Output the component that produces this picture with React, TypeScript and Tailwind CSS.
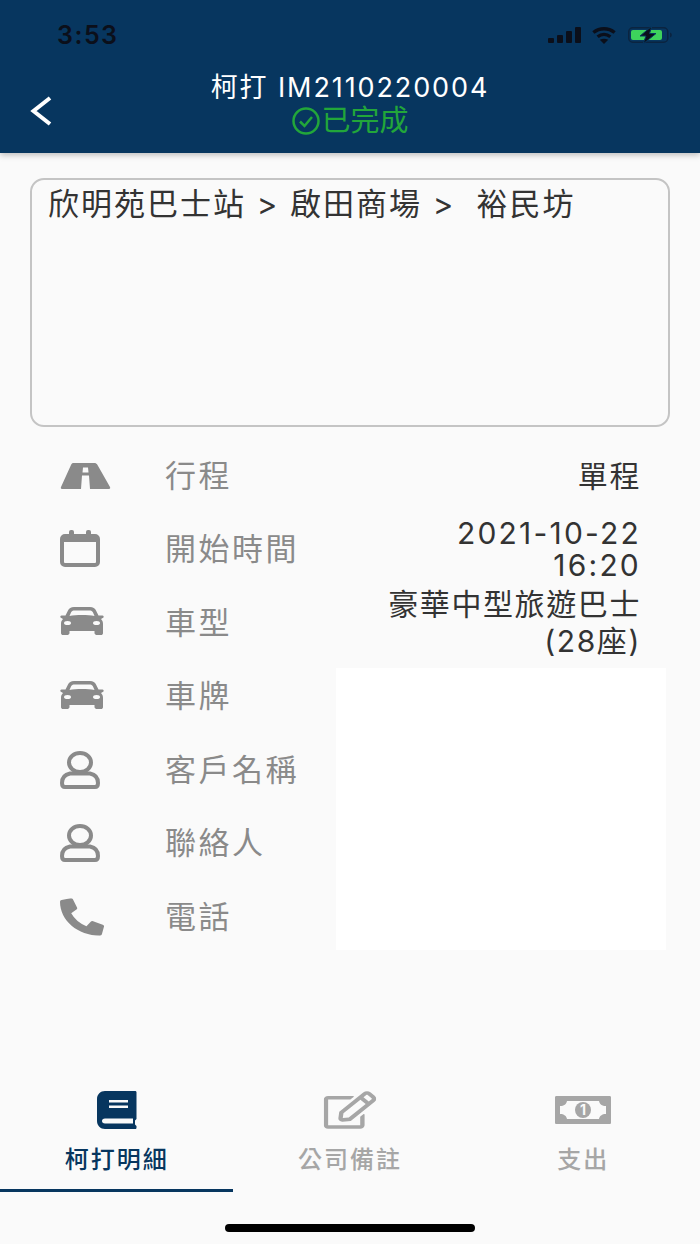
import { FaPhoneAlt, FaRegEdit } from "react-icons/fa";
import type { ReactNode } from "react";

const font = "font-['Inter','Noto_Sans_CJK_TC',sans-serif]";

const Road = () => (
  <svg width="51" height="29" viewBox="0 0 51 29">
    <path d="M13 2 H35 C36 2 37 3 37.5 4 L50 26 C50.5 27 50 28 49 28 H2 C1 28 0.5 27 1 26 L11 4 C11.5 3 12 2 13 2 Z" fill="#8a8a8a" />
    <path d="M23 6.5 H28 L28.5 11.5 H22.5 Z M22 14.5 H29 L30 28 H21 Z" fill="#fafafa" />
  </svg>
);

const Calendar = () => (
  <svg width="40" height="38" viewBox="0 0 40 38" fill="none">
    <rect x="2" y="6" width="36" height="29" rx="3" stroke="#8a8a8a" strokeWidth="4" />
    <rect x="2" y="6" width="36" height="6" fill="#8a8a8a" />
    <rect x="9" y="0" width="5" height="8" rx="2" fill="#8a8a8a" />
    <rect x="26" y="0" width="5" height="8" rx="2" fill="#8a8a8a" />
  </svg>
);

const Car = () => (
  <svg width="44" height="28" viewBox="0 0 44 28" fill="#8a8a8a" className="-mt-[3px]">
    <path
      fillRule="evenodd"
      d="M14 0 H30 C33 0 35 1.5 36 3.5 L38.5 8.5 H42.5 C43.5 8.5 44 9.5 43.5 10.5 L41 12 C42.5 13.5 43 15 43 17 V26 C43 27.5 42 28 41 28 H37 C36 28 34.5 27.5 34.5 26 V24 H9.5 V26 C9.5 27.5 8 28 7 28 H3 C2 28 1 27.5 1 26 V17 C1 15 1.5 13.5 3 12 L0.5 10.5 C0 9.5 0.5 8.5 1.5 8.5 H5.5 L8 3.5 C9 1.5 11 0 14 0 Z M13.5 3.5 H30.5 C31.5 3.5 32.5 4.5 33 5.5 L34.5 9 C28 7.8 16 7.8 9.5 9 L11 5.5 C11.5 4.5 12.5 3.5 13.5 3.5 Z"
    />
    <ellipse cx="7.5" cy="16" rx="3.5" ry="2" fill="#fafafa" />
    <ellipse cx="36.5" cy="16" rx="3.5" ry="2" fill="#fafafa" />
  </svg>
);

const Person = () => (
  <svg width="40" height="38" viewBox="0 0 40 38" fill="none" stroke="#8a8a8a" strokeWidth="4">
    <ellipse cx="20" cy="11.5" rx="11" ry="9.5" />
    <path d="M10 22.5 H30 C35 23.5 38 27 38 32 C38 34.5 37 36 35 36 H5 C3 36 2 34.5 2 32 C2 27 5 23.5 10 22.5 Z" strokeLinejoin="round" />
  </svg>
);

const Book = () => (
  <svg width="40" height="38" viewBox="0 0 40 38">
    <path d="M8 0 H38 C39 0 39.5 0.5 39.5 1.5 V28 L38 29.5 V33.5 L39.5 35 V36.5 C39.5 37.5 39 38 38 38 H8 C3.5 38 0 34.5 0 30 V8 C0 3.5 3.5 0 8 0 Z" fill="#07365f" />
    <path d="M12 9 H31 V11.5 H12 Z M12 14.5 H31 V17 H12 Z" fill="#fafafa" />
    <path d="M8 27.5 H36 V32.5 H8 C6 32.5 5 31.5 5 30 C5 28.5 6 27.5 8 27.5 Z" fill="#fafafa" />
  </svg>
);

const Money = () => (
  <svg width="56" height="28" viewBox="0 0 56 28">
    <path
      fillRule="evenodd"
      d="M1.5 0 H54.5 C55.5 0 56 0.5 56 1.5 V26.5 C56 27.5 55.5 28 54.5 28 H1.5 C0.5 28 0 27.5 0 26.5 V1.5 C0 0.5 0.5 0 1.5 0 Z M12 5 C11.5 8 9 10 5 10 V18 C9 18 11.5 20 12 23 H44 C44.5 20 47 18 51 18 V10 C47 10 44.5 8 44 5 Z"
      fill="#a6a6a6"
    />
    <circle cx="28" cy="14" r="8" fill="#a6a6a6" />
    <text x="28" y="19" textAnchor="middle" fontSize="14" fontWeight="700" fill="#fafafa">1</text>
  </svg>
);

const rows: { icon: ReactNode; label: string; value?: string[]; text?: string }[] = [
  { icon: <Road />, label: "行程", value: ["單程"], text: "leading-[32px] tracking-[1.6px]" },
  { icon: <Calendar />, label: "開始時間", value: ["2021-10-22", "16:20"], text: "leading-[32px] tracking-[2.2px]" },
  { icon: <Car />, label: "車型", value: ["豪華中型旅遊巴士", "(28座)"], text: "leading-[37px] tracking-[1.6px]" },
  { icon: <Car />, label: "車牌" },
  { icon: <Person />, label: "客戶名稱" },
  { icon: <Person />, label: "聯絡人" },
  { icon: <FaPhoneAlt size={44} color="#8a8a8a" className="scale-y-[0.85]" />, label: "電話" },
];

const StatusBar = () => (
  <div className="flex h-[72px] items-start justify-between pt-[21px] pl-[57px] pr-[27px]">
    <span className="text-[25px] leading-[28px] font-semibold tracking-[1.5px] text-[#0b0f1a]">3:53</span>
    <div className="flex h-[28px] items-center">
      <svg width="33" height="16" viewBox="0 0 33 16" fill="#0b0f1a">
        <rect x="0" y="11" width="6" height="5" rx="1" />
        <rect x="9" y="8" width="6" height="8" rx="1" />
        <rect x="18" y="4" width="6" height="12" rx="1" />
        <rect x="27" y="0" width="6" height="16" rx="1" />
      </svg>
      <svg width="28" height="17" viewBox="0 0 28 20" fill="none" stroke="#0b0f1a" strokeWidth="4" className="ml-[9px]">
        <path d="M1.5 6.5 C9 0.5 19 0.5 26.5 6.5" />
        <path d="M6.5 11.5 C11 8 17 8 21.5 11.5" />
        <path d="M14 20 L9 15 C12.5 13.5 15.5 13.5 19 15 Z" fill="#0b0f1a" stroke="none" />
      </svg>
      <svg width="45" height="18" viewBox="0 0 45 18" className="ml-[10px]">
        <rect x="0.75" y="1.75" width="39" height="14.5" rx="4" fill="none" stroke="#0b2440" strokeWidth="1.5" />
        <rect x="3" y="4" width="31" height="10" rx="2" fill="#3dd35c" />
        <path d="M42 6.5 C44.5 7.5 44.5 10.5 42 11.5 Z" fill="#0b2440" />
        <path d="M24 0 L12 10 H18 L15 18 L28 7.5 H21.5 Z" fill="#0b0f1a" stroke="#07365f" strokeWidth="1" />
      </svg>
    </div>
  </div>
);

const Header = () => (
  <header className="relative z-10 h-[153px] bg-[#07365f] shadow-[0_2px_6px_rgba(0,0,0,0.25)]">
    <StatusBar />
    <div className="flex items-start">
      <button className="mt-[24px] ml-[29px] w-[24px]">
        <svg width="24" height="30" viewBox="0 0 24 30" fill="none" stroke="#ffffff" strokeWidth="4">
          <path d="M21 2 L4.5 15 L21 28" />
        </svg>
      </button>
      <div className="flex flex-1 flex-col items-center pr-[53px]">
        <div className="text-[27px] leading-[32px] tracking-[1.9px] text-white">柯打 IM2110220004</div>
        <div className="flex items-center text-[29px] leading-[34px] text-[#22a63a]">
          <svg width="30" height="30" viewBox="0 0 30 30" fill="none" stroke="#22a63a" strokeWidth="2.5">
            <circle cx="15" cy="15" r="12.5" />
            <path d="M9 15.5 L13.5 20 L21 11" />
          </svg>
          已完成
        </div>
      </div>
    </div>
  </header>
);

const Tab = ({ icon, label, active }: { icon: ReactNode; label: string; active?: boolean }) => (
  <div className={`flex h-[112px] flex-1 flex-col items-center pt-[11px] ${active ? "border-b-[3px] border-[#07365f]" : ""}`}>
    <div className="flex h-[38px] items-center">{icon}</div>
    <div className={`mt-[15px] text-[24px] leading-[32px] tracking-[2px] font-medium ${active ? "text-[#07365f]" : "text-[#a6a6a6]"}`}>
      {label}
    </div>
  </div>
);

export default function App() {
  return (
    <div className={`relative flex h-[1244px] w-[700px] flex-col overflow-hidden bg-[#fafafa] ${font}`}>
      <Header />

      <div className="mx-[30px] mt-[25px] h-[249px] rounded-[14px] border-2 border-[#c4c4c4] px-[16px] pt-[4px] text-[31px] leading-[40px] tracking-[2px] whitespace-pre text-[#333333]">
        欣明苑巴士站 &gt; 啟田商場 &gt;  裕民坊
      </div>

      <div className="mt-[12px] flex flex-col">
        {rows.map((row) => (
          <div key={row.label} className="flex h-[73.5px] items-center pl-[60px] pr-[59px]">
            <div className="flex w-[105px] items-center">{row.icon}</div>
            <div className="w-[140px] text-[31px] tracking-[2.5px] text-[#8a8a8a]">{row.label}</div>
            <div className={`flex-1 text-right text-[30px] text-[#333333] ${row.text ?? ""}`}>
              {row.value?.map((line) => (
                <div key={line} className="whitespace-nowrap">{line}</div>
              ))}
            </div>
          </div>
        ))}
      </div>

      {/* redacted values */}
      <div className="absolute left-[336px] top-[668px] h-[282px] w-[330px] bg-white" />

      <nav className="mt-auto flex w-[700px]">
        <Tab active label="柯打明細" icon={<Book />} />
        <Tab label="公司備註" icon={<FaRegEdit size={42} color="#a6a6a6" className="scale-x-125" />} />
        <Tab label="支出" icon={<Money />} />
      </nav>
      <div className="flex h-[52px] justify-center pt-[32px]">
        <div className="h-[8px] w-[250px] rounded-full bg-black" />
      </div>
    </div>
  );
}
